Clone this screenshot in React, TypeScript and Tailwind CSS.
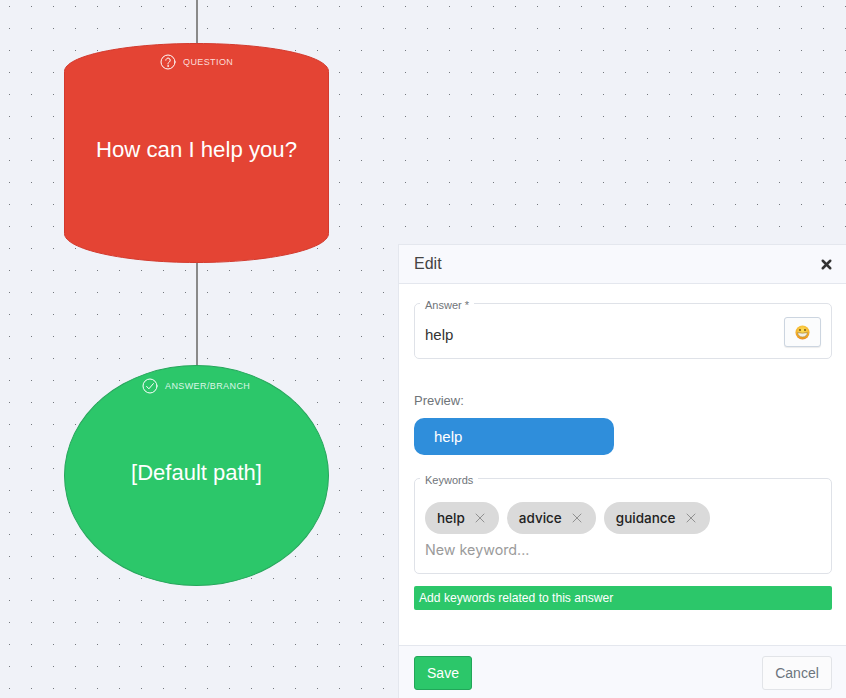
import { X } from "lucide-react";

const sans = "font-['Liberation_Sans',Arial,sans-serif]";

function Smiley() {
  return (
    <svg width="15" height="15" viewBox="0 0 15 15">
      <defs>
        <radialGradient id="face" cx="50%" cy="35%" r="65%">
          <stop offset="0%" stopColor="#fde15a" />
          <stop offset="70%" stopColor="#f5b42c" />
          <stop offset="100%" stopColor="#e8851a" />
        </radialGradient>
      </defs>
      <circle cx="7.5" cy="7.5" r="7" fill="url(#face)" />
      <ellipse cx="5" cy="5" rx="0.9" ry="1.1" fill="#6b4a12" />
      <ellipse cx="10" cy="5" rx="0.9" ry="1.1" fill="#6b4a12" />
      <path d="M2.6 7.6 Q7.5 8.8 12.4 7.6 Q11.8 12 7.5 12 Q3.2 12 2.6 7.6Z" fill="#f4f0e4" stroke="#8a6a2a" strokeWidth="0.5" />
    </svg>
  );
}

function QuestionIcon() {
  return (
    <svg width="16" height="16" viewBox="0 0 16 16" fill="none" stroke="#fff" strokeWidth="1" strokeLinecap="round">
      <circle cx="8" cy="8" r="7" />
      <path d="M5.8 6.2a2.2 2.2 0 1 1 3.5 1.8c-.9.6-1.3 1-1.3 2" />
      <circle cx="8" cy="12" r="0.35" fill="#fff" />
    </svg>
  );
}

function CheckIcon() {
  return (
    <svg width="16" height="16" viewBox="0 0 16 16" fill="none" stroke="#fff" strokeWidth="1" strokeLinecap="round" strokeLinejoin="round">
      <circle cx="8" cy="8" r="7" />
      <path d="M4.6 8.4l2.3 2.4 4.5-5.2" />
    </svg>
  );
}

function Chip({ label }: { label: string }) {
  return (
    <div className="flex h-8 items-center gap-[7px] rounded-full bg-[#dadada] pl-3 pr-[11px] font-['Inter',sans-serif] text-[13.5px] font-medium text-[#222]">
      <span className="pt-[1px]">{label}</span>
      <X size={16} strokeWidth={1.4} className="text-[#8b8b8b]" />
    </div>
  );
}

function Canvas() {
  return (
    <div className="relative h-[698px] w-[846px] overflow-hidden bg-[#f0f2f8] bg-[radial-gradient(circle_at_9.5px_6.5px,#74787e_0.45px,transparent_0.9px)] bg-[length:22px_22px]">
      {/* connectors */}
      <div className="absolute left-[196px] top-0 h-[44px] w-[1.5px] bg-[#8a8a8a]" />
      <div className="absolute left-[196px] top-[262px] h-[104px] w-[1.5px] bg-[#8a8a8a]" />

      {/* question node */}
      <div className="absolute left-[64px] top-[43px] h-[220px] w-[265px] text-white">
        <svg width="265" height="220" viewBox="0 0 265 220" className="absolute inset-0">
          <path
            d="M0.5 28.5 C0.5 12.8 59.6 0.5 132.5 0.5 C205.4 0.5 264.5 12.8 264.5 28.5 L264.5 190.5 C264.5 206.2 205.4 219.5 132.5 219.5 C59.6 219.5 0.5 206.2 0.5 190.5 Z"
            fill="#e44434"
            stroke="#d33a2e"
          />
        </svg>
        <div className={`absolute left-[96px] top-[11px] flex items-center gap-[7px] ${sans} text-[9px] tracking-[0.4px] text-[#fbdcd8]`}>
          <QuestionIcon />
          <span className="pt-[1px]">QUESTION</span>
        </div>
        <div className={`absolute inset-x-0 top-[93px] text-center ${sans} text-[22.2px] leading-[27px]`}>How can I help you?</div>
      </div>

      {/* answer node */}
      <div className="absolute left-[64px] top-[365px] h-[221px] w-[265px] rounded-[50%] border border-[#27a65c] bg-[#2cc76a] text-white">
        <div className={`absolute left-[77px] top-[12px] flex items-center gap-[7px] ${sans} text-[9px] tracking-[0.4px] text-[#dcf6e6]`}>
          <CheckIcon />
          <span className="pt-[1px]">ANSWER/BRANCH</span>
        </div>
        <div className={`absolute inset-x-0 top-[93px] text-center ${sans} text-[22px] leading-[27px]`}>[Default path]</div>
      </div>

      <EditPanel />
    </div>
  );
}

function EditPanel() {
  return (
    <div className={`absolute left-[398px] top-[244px] flex h-[454px] w-[448px] flex-col border-l border-t border-[#e4e7ee] bg-white ${sans}`}>
      <div className="flex h-[39px] items-center justify-between border-b border-[#e4e7ee] bg-[#f8f9fd] pl-[15px] pr-[12px]">
        <span className="text-[16px] text-[#444]">Edit</span>
        <X size={15} strokeWidth={4} className="text-[#333]" />
      </div>

      <div className="flex flex-1 flex-col pl-[15px] pr-[14px] pt-[11px]">
        <fieldset className="h-[64px] rounded-[5px] border border-[#dfe2e8] px-[10px]">
          <legend className="-ml-[5px] px-[5px] pt-[4px] text-[11px] leading-[12px] text-[#6f7479]">Answer *</legend>
          <div className="mt-[6px] flex h-[30px] items-center justify-between">
            <span className="pt-[6px] text-[15px] text-[#333]">help</span>
            <div className="flex h-[30px] w-[37px] items-center justify-center rounded-[3px] border border-[#ccd5e0] bg-[#fbfcfd] shadow-[0_1px_1px_rgba(0,0,0,0.08)]">
              <Smiley />
            </div>
          </div>
        </fieldset>

        <div className="mt-[34px] text-[13px] leading-[15px] text-[#6f7479]">Preview:</div>
        <div className="mt-[10px] flex h-[37px] w-[200px] items-center rounded-[10px] bg-[#2f8edb] pl-5 pt-[1px] text-[15px] text-white">help</div>

        <fieldset className="mt-[15px] h-[104px] rounded-[5px] border border-[#dfe2e8] px-[10px]">
          <legend className="-ml-[5px] px-[5px] pt-[4px] text-[11px] leading-[12px] text-[#6f7479]">Keywords</legend>
          <div className="mt-[16px] flex gap-2">
            <Chip label="help" />
            <Chip label="advice" />
            <Chip label="guidance" />
          </div>
          <div className="mt-[7px] font-['Inter',sans-serif] text-[14.3px] leading-[18px] text-[#9b9b9b]">New keyword...</div>
        </fieldset>

        <div className="mt-[12px] flex h-6 items-center rounded-[2px] bg-[#2cc76a] pl-[5px] text-[12.1px] text-white">Add keywords related to this answer</div>
      </div>

      <div className="flex h-[53px] items-start justify-between border-t border-[#e4e7ee] bg-[#f8f9fd] pl-[15px] pr-[14px] pt-[10px]">
        <div className="flex h-[34px] w-[58px] items-center justify-center rounded-[3px] border border-[#22a659] bg-[#2cc76a] text-[14px] text-white">Save</div>
        <div className="flex h-[34px] w-[70px] items-center justify-center rounded-[3px] border border-[#e2e4e8] bg-[#fbfbfc] text-[14px] text-[#6c757d]">Cancel</div>
      </div>
    </div>
  );
}

export default function App() {
  return <Canvas />;
}
